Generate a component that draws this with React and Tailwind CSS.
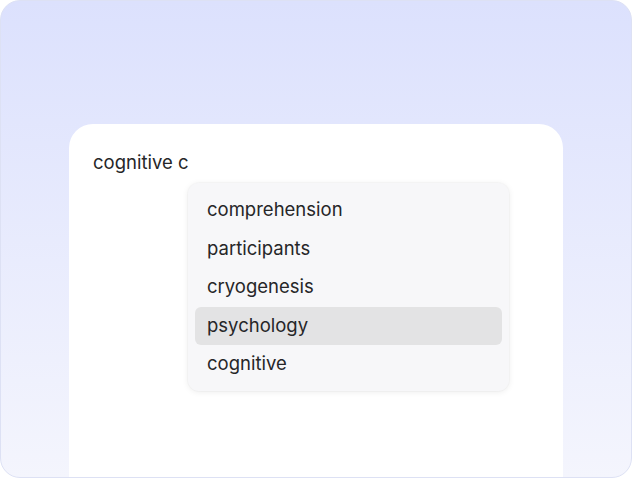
const suggestions = [
  "comprehension",
  "participants",
  "cryogenesis",
  "psychology",
  "cognitive",
];

export default function App() {
  const active = "psychology";

  return (
    <div className="w-[632px] h-[478px] bg-white">
      <div className="w-full h-full flex flex-col rounded-[20px] border border-[#dde1f4] overflow-hidden bg-gradient-to-b from-[#dce1fd] to-[#f4f5fd] pt-[123px] px-[68px] font-['Inter',sans-serif]">
        <div className="flex-1 bg-white rounded-t-[24px] pt-[26px] px-[24px]">
          <div className="text-[18.5px] leading-[24px] text-[#262628]">
            cognitive c
          </div>
          <div className="ml-[95px] mt-[9px] w-[321px] rounded-[11px] bg-[#f7f7f9] px-[7px] pt-[8px] pb-[7px] shadow-[0_1px_6px_rgba(0,0,0,0.08),0_0_0_1px_rgba(0,0,0,0.02)]">
            {suggestions.map((word) => (
              <div
                key={word}
                className={`h-[38.5px] flex items-center px-[12px] rounded-[6px] text-[18.5px] text-[#262628] ${
                  word === active ? "bg-[#e3e3e4]" : ""
                }`}
              >
                {word}
              </div>
            ))}
          </div>
        </div>
      </div>
    </div>
  );
}
